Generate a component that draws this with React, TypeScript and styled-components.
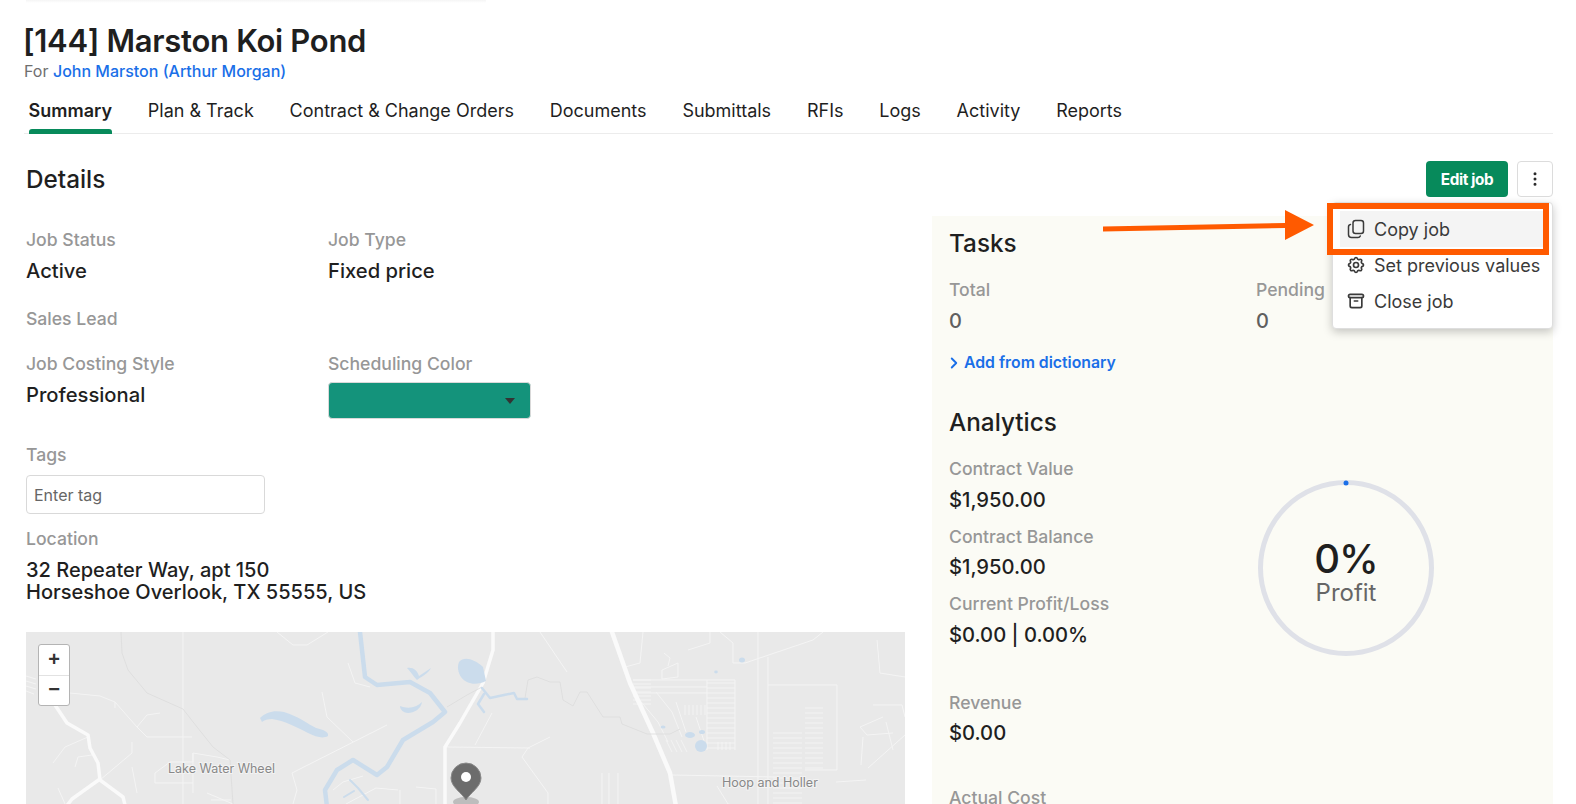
import styled, { createGlobalStyle } from "styled-components"
import { ChevronRight, EllipsisVertical } from "lucide-react"
import { TbArchive, TbSettings } from "react-icons/tb"

const Global = createGlobalStyle`
  html, body { margin: 0; background: #fff; overflow: hidden; }
  * { box-sizing: border-box; }
  body { font-family: Inter, "Liberation Sans", sans-serif; color: #1f1f1f; }
`

const Page = styled.div`
  position: relative; height: 804px; overflow: hidden; padding: 0 23px 0 26px;
`
const TopFade = styled.div`
  height: 3px; width: 460px; margin-bottom: 18.5px;
  background: linear-gradient(#f5f5f5, #fff);
`
const Title = styled.h1`
  margin: 0 0 0 -3px; font-size: 31px; line-height: 38px; font-weight: 600; letter-spacing: -0.3px; color: #1f1f1f;
`
const ForLine = styled.div`
  margin: 1.5px 0 0 -2px; font-size: 16px; line-height: 20px; font-weight: 400; color: #6f6f6f;
`
const ForLink = styled.a`color: #1a6fe8; font-weight: 500;`
const Tabs = styled.nav`
  display: flex; gap: 35.8px; margin: 10px 0 0 -2px; height: 43px; padding-left: 4.5px;
  border-bottom: 1.5px solid #ececec;
`
const Tab = styled.div<{ $active?: boolean }>`
  position: relative; font-size: 18px; line-height: 22px; padding-top: 9px; height: 43px;
  font-weight: ${p => (p.$active ? 600 : 400)};
  color: #1f1f1f;
  ${p => p.$active && `
    &::after {
      content: ""; position: absolute; left: 0; right: 0; bottom: 0; height: 5px;
      background: #078a5b; border-radius: 3px 3px 0 0;
    }
  `}
`
const DetailsBar = styled.div`
  display: flex; align-items: center; justify-content: space-between; height: 36px; margin-top: 27px;
`
const H2 = styled.h2<{ $mt?: number }>`
  margin: ${p => p.$mt ?? 0}px 0 0; font-size: 24.3px; font-weight: 500; line-height: 30px; color: #1f1f1f;
`
const BarActions = styled.div`display: flex; gap: 9px;`
const EditBtn = styled.button`
  width: 82px; height: 36px; background: #078a5b; color: #fff; border: none; border-radius: 4px;
  font: 700 15.3px Inter, sans-serif; letter-spacing: -0.4px;
`
const MoreBtn = styled.button`
  width: 36px; height: 36px; background: #fff; border: 1px solid #dcdcdc; border-radius: 4px;
  display: flex; align-items: center; justify-content: center; color: #2a2a2a; padding: 0;
`
const Columns = styled.div`display: grid; grid-template-columns: 879px 621px; gap: 27px; margin-top: 19px;`
const Left = styled.div`padding-top: 13px;`
const Row = styled.div`display: grid; grid-template-columns: 302px 1fr; margin-bottom: 25px;`
const Field = styled.div<{ $mb?: number }>`margin-bottom: ${p => p.$mb ?? 0}px;`
const Label = styled.div`font-size: 17.6px; line-height: 22px; font-weight: 500; color: #979797;`
const Value = styled.div`font-size: 20.2px; line-height: 24px; font-weight: 500; color: #1f1f1f; margin-top: 8px;`
const Address = styled.div`font-size: 20.05px; line-height: 22px; font-weight: 500; color: #1f1f1f; margin-top: 9px;`
const ColorSelect = styled.div`
  position: relative; width: 203px; height: 37px; margin-top: 7px; background: #14937b;
  border: 1px solid #d9d9d9; border-radius: 4px;
  &::after {
    content: ""; position: absolute; right: 15px; top: 15px;
    border-left: 5.5px solid transparent; border-right: 5.5px solid transparent; border-top: 6px solid #333;
  }
`
const TagInput = styled.input`
  display: block; width: 239px; height: 39px; margin-top: 9px; padding: 0 7px;
  border: 1px solid #d9d9d9; border-radius: 4px; font: 400 16px Inter, sans-serif; background: #fff;
  &::placeholder { color: #666; opacity: 1; }
`
const MapBox = styled.div`position: relative; height: 180px; margin-top: 29px; background: #e9e9e9; overflow: hidden;`
const MapSvg = styled.svg`display: block; width: 100%; height: 100%;`
const ZoomCtl = styled.div`
  position: absolute; left: 12px; top: 12px; width: 32px; height: 62px; background: #fff;
  border: 1.5px solid #b4b4b4; border-radius: 3px; overflow: hidden;
`
const ZoomBtn = styled.div`
  height: 29.5px; display: flex; align-items: center; justify-content: center;
  font: 700 20px "Liberation Sans", sans-serif; color: #333;
  & + & { border-top: 1px solid #e2e2e2; }
`
const Panel = styled.section`background: #fbfbf5; padding: 12px 17px 0; height: 640px;`
const TaskGrid = styled.div`display: grid; grid-template-columns: 307px 1fr; margin-top: 21px;`
const Dim = styled.div`font-size: 20px; line-height: 24px; font-weight: 500; color: #5f5f5f; margin-top: 8px;`
const AddLink = styled.a`
  display: flex; align-items: center; gap: 1px; margin: 19px 0 0 -4px; font-size: 15.8px; line-height: 22px;
  font-weight: 600; color: #1a6fe8;
`
const AnalyticsWrap = styled.div`display: grid; grid-template-columns: 307px 1fr; margin-top: 7px;`
const StatBlock = styled.div<{ $gap?: number }>`margin-top: ${p => p.$gap ?? 14}px;`
const Money = styled.div`font-size: 20.2px; line-height: 24px; font-weight: 500; color: #1f1f1f; margin-top: 7.5px;`
const RingWrap = styled.div`
  position: relative; width: 176px; height: 176px; margin-top: 36px; margin-left: 2px;
  display: flex; flex-direction: column; align-items: center; justify-content: center;
`
const RingSvg = styled.svg`position: absolute; inset: 0;`
const Percent = styled.div`font-size: 40px; line-height: 40px; font-weight: 500; letter-spacing: -1px; color: #1f1f1f; margin-top: 10px;`
const Profit = styled.div`font-size: 24px; line-height: 28px; color: #666;`
const Menu = styled.div`
  position: absolute; left: 1332px; top: 202px; width: 221px; height: 127px; background: #fff;
  border: 1px solid #dedede; border-radius: 4px; padding: 8px 7px;
  box-shadow: 0 3px 10px rgba(0,0,0,0.22);
`
const MenuItem = styled.div<{ $on?: boolean }>`
  display: flex; align-items: center; gap: 8px; height: 36px; padding-left: 6px;
  font-size: 18px; color: #3a3a3a; white-space: nowrap;
  background: ${p => (p.$on ? "#f4f4f4" : "transparent")};
`
const Callout = styled.div`
  position: absolute; left: 1327px; top: 203px; width: 222px; height: 52px; border: 6px solid #ff5a00;
`
const Arrow = styled.svg`position: absolute; left: 1100px; top: 205px;`

const TABS = ["Summary", "Plan & Track", "Contract & Change Orders", "Documents", "Submittals", "RFIs", "Logs", "Activity", "Reports"]

const range = (from: number, to: number, step: number) => {
  const out: number[] = []
  for (let v = from; v <= to; v += step) out.push(v)
  return out
}

function CopyIcon() {
  return (
    <svg width="20" height="20" viewBox="0 0 20 20" fill="none" stroke="currentColor" strokeWidth="1.5" strokeLinecap="round" strokeLinejoin="round">
      <rect x="7" y="1.5" width="10.5" height="13" rx="2.5" />
      <path d="M4.5 5.5A2.5 2.5 0 0 0 2.5 8v7.5A3 3 0 0 0 5.5 18.5H12a2.5 2.5 0 0 0 2.3-1.6" />
    </svg>
  )
}

function MapArt() {
  return (
    <MapSvg viewBox="0 0 879 180" preserveAspectRatio="none">
      <g fill="none" stroke="#f4f4f4" strokeWidth="1" strokeLinejoin="round">
        {/* left side roads */}
        <path d="M0 44l10 3M0 49l10 3M0 54l10 3M0 59l8 3" />
        <path d="M44 61l30 3 15 6 22 25 10 10h45M111 95l10-12 13-2M89 70v6" />
        <path d="M62 105l-23 10-12 16M66 123l-14 2-3 10M74 148l32-27v-11M106 135l5 26M32 156l7 16" />
        <path d="M361 93l-95 48 5 17-4 14M296 60l5 25 26 25M322 31l7 20 15 4" />
        <path d="M251 0l16 13h14l21-13M157 0v172" />
        <path d="M129 141l15-11h23v-9l24 4 13 3M129 141v10h38M167 121v40M181 161l26 11M185 168h20" />
        <path d="M307 158l10-8 20-6M320 172l30-16 22 2M374 158v14M390 155l20 2v15" />
        {/* right side roads */}
        <path d="M514 0l27 40M496 125l6-9 22-11M496 125l26 36v19M421 115l83 1M466 81l-17 32" />
        <path d="M576 141v39M583 141v39M592 141v39" />
        <path d="M599 35l15-4 3-31M684 0v11l-22 7M694 0l13 11v20h12l68-23 10-8" />
        <path d="M636 38l16-7v14l-16 2zM638 21l6 5-2 8" />
        <path d="M607 48h102v70M607 55h74M607 61h74M681 48v70" />
        <path d="M612 66l20 24 10 20M630 60l16 20 10 25M650 70l10 30M670 85l10 30" />
        <path d="M742 25v155M742 53h69v85h-32M732 0v180" />
        <path d="M646 143l105 2M691 154l11 18 48 8M810 150l30-2" />
        <path d="M851 8l3 33 25 4M847 73h29l3 12M857 85l-23 10 7 8 26-2M879 103l-37 33M837 105l-2 28M860 90l7 28" />
      </g>
      <g stroke="#f4f4f4" strokeWidth="0.9">
        {range(51, 118, 5).map(y => <line key={y} x1="681" x2="709" y1={y} y2={y} />)}
        {range(659, 681, 4).map(x => <line key={x} x1={x} x2={x} y1="73" y2="83" />)}
        {range(101, 172, 5).map(y => <line key={y} x1="747" x2="776" y1={y} y2={y} />)}
        {range(76, 138, 5).map(y => <line key={y} x1="779" x2="797" y1={y} y2={y} />)}
        {range(66, 90, 4).map(y => <line key={y} x1="607" x2="625" y1={y - 18} y2={y - 18} />)}
        {range(640, 658, 5).map(x => <line key={x} x1={x} x2={x + 6} y1="108" y2="120" />)}
        {range(692, 706, 4).map(x => <line key={x} x1={x} x2={x} y1="110" y2="118" />)}
      </g>
      <g fill="none" stroke="#fafafa" strokeLinejoin="round" strokeLinecap="round">
        <path strokeWidth="4.5" d="M586 0l18 51 23 50 17 40 7 39" />
        <path strokeWidth="3.5" d="M467 0v18l-10 33-23 40-15 24v65" />
        <path strokeWidth="3.5" d="M29 73l12 18 21 12 2 13 8 15 2 17 23 17 3 12M74 147l-28 20-10 13" />
      </g>
      <g fill="none" stroke="#dcdcdc" strokeWidth="0.8">
        <path d="M95 0l1 21 6 17 19 23 36 16 14 18 16 20 17 13 3 44" />
        <path d="M499 66l3-18 9-3 13 5h10l3 18 10 6 7-14h7l16 25h17l2 7 25 10h23l10-5" />
        <path d="M421 75l20-12 15-8" />
      </g>
      <g fill="#cbdcec">
        <path d="M234 86c6-6 14-8 24-6 14 4 24 12 32 16 8 2 13 4 12 8-5 3-12 1-20-3-10-5-22-12-36-14-4 0-8 1-10 3z" />
        <path d="M433 30c5-6 15-3 24 5l3 14c-10 5-20 3-25-4-3-5-4-10-2-15z" />
        <path d="M381 36c6-1 10 2 12 8l12-8c-2 5-10 9-14 12-4-4-6-8-10-12z" />
        <path d="M374 74c8 3 16 2 22-4-1 7-8 11-14 11-4 0-8-3-8-7z" />
        <ellipse cx="716" cy="28" rx="3" ry="2.5" />
        <ellipse cx="690" cy="40" rx="1.8" ry="1.4" />
        <ellipse cx="675" cy="114" rx="6" ry="6" />
        <ellipse cx="664" cy="103" rx="5" ry="3" />
        <ellipse cx="676" cy="100" rx="3" ry="2" />
        <ellipse cx="637" cy="95" rx="2.5" ry="1.5" />
      </g>
      <g fill="none" stroke="#cbdcec" strokeLinejoin="round" strokeLinecap="round">
        <path strokeWidth="4.5" d="M334 0l5 45 12 8 33-3 20 11 15 19-12 10-30 18-16 27-10 8-24-15-16 10-12 20 2 17" />
        <path strokeWidth="2.5" d="M456 56l8 10 14-3 10-2 3 6h10M458 62l-6 10 6 8" />
        <path strokeWidth="2" d="M324 148l8 8 10 12M318 165l10-6" />
      </g>
      <g fontFamily="Inter, sans-serif" fontSize="12.5" fill="#888" stroke="#f3f3f3" strokeWidth="2" paintOrder="stroke">
        <text x="142" y="141">Lake Water Wheel</text>
        <text x="696" y="155">Hoop and Holler</text>
      </g>
      <ellipse cx="440" cy="170" rx="13" ry="5" fill="#bdbdbd" />
      <path d="M440 168c-4-7-15-13-15-22a15 15 0 0 1 30 0c0 9-11 15-15 22z" fill="#6c6c6c" stroke="#8a8a8a" strokeWidth="1" />
      <circle cx="440" cy="145" r="5" fill="#fff" />
    </MapSvg>
  )
}

export default function App() {
  return (
    <Page>
      <Global />
      <TopFade />
      <Title>[144] Marston Koi Pond</Title>
      <ForLine>For <ForLink>John Marston (Arthur Morgan)</ForLink></ForLine>
      <Tabs>
        {TABS.map((t, i) => <Tab key={t} $active={i === 0}>{t}</Tab>)}
      </Tabs>
      <DetailsBar>
        <H2>Details</H2>
        <BarActions>
          <EditBtn>Edit job</EditBtn>
          <MoreBtn><EllipsisVertical size={18} /></MoreBtn>
        </BarActions>
      </DetailsBar>
      <Columns>
        <Left>
          <Row>
            <Field><Label>Job Status</Label><Value>Active</Value></Field>
            <Field><Label>Job Type</Label><Value>Fixed price</Value></Field>
          </Row>
          <Field $mb={23}><Label>Sales Lead</Label></Field>
          <Row>
            <Field><Label>Job Costing Style</Label><Value>Professional</Value></Field>
            <Field><Label>Scheduling Color</Label><ColorSelect /></Field>
          </Row>
          <Field $mb={14}>
            <Label>Tags</Label>
            <TagInput placeholder="Enter tag" />
          </Field>
          <Field>
            <Label>Location</Label>
            <Address>32 Repeater Way, apt 150<br />Horseshoe Overlook, TX 55555, US</Address>
          </Field>
          <MapBox>
            <MapArt />
            <ZoomCtl>
              <ZoomBtn>+</ZoomBtn>
              <ZoomBtn>−</ZoomBtn>
            </ZoomCtl>
          </MapBox>
        </Left>
        <Panel>
          <H2>Tasks</H2>
          <TaskGrid>
            <div><Label>Total</Label><Dim>0</Dim></div>
            <div><Label>Pending</Label><Dim>0</Dim></div>
          </TaskGrid>
          <AddLink><ChevronRight size={18} strokeWidth={2.5} />Add from dictionary</AddLink>
          <H2 $mt={33}>Analytics</H2>
          <AnalyticsWrap>
            <div>
              <StatBlock><Label>Contract Value</Label><Money>$1,950.00</Money></StatBlock>
              <StatBlock><Label>Contract Balance</Label><Money>$1,950.00</Money></StatBlock>
              <StatBlock><Label>Current Profit/Loss</Label><Money>$0.00 | 0.00%</Money></StatBlock>
              <StatBlock $gap={45}><Label>Revenue</Label><Money>$0.00</Money></StatBlock>
              <StatBlock $gap={42}><Label>Actual Cost</Label></StatBlock>
            </div>
            <RingWrap>
              <RingSvg width="176" height="176" viewBox="0 0 176 176">
                <circle cx="88" cy="88" r="85.5" fill="none" stroke="#dfe1e8" strokeWidth="5" />
                <circle cx="88" cy="3" r="2.5" fill="#1a6fe8" />
              </RingSvg>
              <Percent>0%</Percent>
              <Profit>Profit</Profit>
            </RingWrap>
          </AnalyticsWrap>
        </Panel>
      </Columns>
      <Menu>
        <MenuItem $on><CopyIcon />Copy job</MenuItem>
        <MenuItem><TbSettings size={20} />Set previous values</MenuItem>
        <MenuItem><TbArchive size={20} />Close job</MenuItem>
      </Menu>
      <Callout />
      <Arrow width="216" height="40" viewBox="0 0 216 40">
        <path d="M3 21.5l182-3.5v-13l29 15-29 15v-12L3 26.5z" fill="#ff5a00" />
      </Arrow>
    </Page>
  )
}
